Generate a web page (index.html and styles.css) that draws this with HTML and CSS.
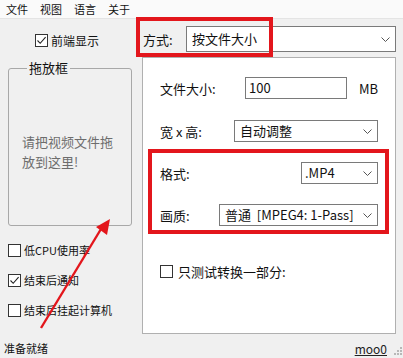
FILE: index.html
```html
<!DOCTYPE html>
<html lang="zh-CN">
<head>
    <meta charset="UTF-8">
    <title>Moo0 视频转换器</title>
    <link rel="stylesheet" href="styles.css">
</head>
<body>
    <div class="window">
        <div class="menubar">
            <span>文件</span>
            <span>视图</span>
            <span>语言</span>
            <span>关于</span>
        </div>
        <div class="main">
            <div class="side">
                <div class="check top-check">
                    <span class="box"><svg width="11" height="11" viewBox="0 0 11 11"><path d="M1.5 5.5 L4.2 8.3 L9.6 2.2" fill="none" stroke="#222" stroke-width="1.1"/></svg></span>
                    <span>前端显示</span>
                </div>
                <fieldset class="dropbox">
                    <legend>拖放框</legend>
                    <p>请把视频文件拖放到这里!</p>
                </fieldset>
                <div class="side-checks">
                    <div class="check">
                        <span class="box"></span>
                        <span>低CPU使用率</span>
                    </div>
                    <div class="check">
                        <span class="box"><svg width="11" height="11" viewBox="0 0 11 11"><path d="M1.5 5.5 L4.2 8.3 L9.6 2.2" fill="none" stroke="#222" stroke-width="1.1"/></svg></span>
                        <span>结束后通知</span>
                    </div>
                    <div class="check">
                        <span class="box"></span>
                        <span>结束后挂起计算机</span>
                    </div>
                </div>
            </div>
            <div class="content">
                <div class="mode-row">
                    <span class="mode-label">方式:</span>
                    <div class="combo mode-combo">
                        <span>按文件大小</span>
                        <svg width="9" height="5" viewBox="0 0 9 5"><polyline points="0.5,0.5 4.5,4.5 8.5,0.5" fill="none" stroke="#555"/></svg>
                    </div>
                </div>
                <div class="panel">
                    <div class="row">
                        <span class="label size-label">文件大小:</span>
                        <div class="textbox">100</div>
                        <span class="unit">MB</span>
                    </div>
                    <div class="row dim-row">
                        <span class="label dim-label">宽 x 高:</span>
                        <div class="combo grow">
                            <span>自动调整</span>
                            <svg width="9" height="5" viewBox="0 0 9 5"><polyline points="0.5,0.5 4.5,4.5 8.5,0.5" fill="none" stroke="#555"/></svg>
                        </div>
                    </div>
                    <div class="marked">
                        <div class="row">
                            <span class="label grow">格式:</span>
                            <div class="combo format-combo">
                                <span>.MP4</span>
                                <svg width="9" height="5" viewBox="0 0 9 5"><polyline points="0.5,0.5 4.5,4.5 8.5,0.5" fill="none" stroke="#555"/></svg>
                            </div>
                        </div>
                        <div class="row quality-row">
                            <span class="label quality-label">画质:</span>
                            <div class="combo grow">
                                <span class="keep">普通  [MPEG4: 1-Pass]</span>
                                <svg width="9" height="5" viewBox="0 0 9 5"><polyline points="0.5,0.5 4.5,4.5 8.5,0.5" fill="none" stroke="#555"/></svg>
                            </div>
                        </div>
                    </div>
                    <div class="check test-check">
                        <span class="box"></span>
                        <span>只测试转换一部分:</span>
                    </div>
                </div>
            </div>
        </div>
        <div class="statusbar">
            <span>准备就绪</span>
            <span class="right">
                <a href="#">moo0</a>
                <svg class="grip" width="9" height="9" viewBox="0 0 9 9" fill="#b8b8b8">
                    <rect x="6" y="0" width="2" height="2"/>
                    <rect x="3" y="3" width="2" height="2"/><rect x="6" y="3" width="2" height="2"/>
                    <rect x="0" y="6" width="2" height="2"/><rect x="3" y="6" width="2" height="2"/><rect x="6" y="6" width="2" height="2"/>
                </svg>
            </span>
        </div>

        <!-- annotations drawn over the window -->
        <div class="mark-mode"></div>
        <svg class="arrow" width="403" height="358" viewBox="0 0 403 358">
            <line x1="41" y1="328" x2="101" y2="229" stroke="#e3161c" stroke-width="2.4"/>
            <polygon points="110,219 96,227 107,235" fill="#e3161c"/>
        </svg>
    </div>
</body>
</html>
```

FILE: styles.css
```css
body {
    margin: 0;
    padding: 0;
    background: #f0f0f0;
    font-family: "Noto Sans CJK SC", "Noto Sans", sans-serif;
    color: #111;
}
.window {
    position: relative;
    width: 403px;
    height: 358px;
    display: flex;
    flex-direction: column;
    overflow: hidden;
}
.menubar {
    height: 18px;
    display: flex;
    align-items: center;
    gap: 12px;
    padding-left: 6px;
    font-size: 11px;
    line-height: 14px;
    background: #fafafa;
    border-bottom: 1px solid #e4e4e4;
}
.main {
    flex: 1;
    display: flex;
}
.side {
    width: 142px;
    display: flex;
    flex-direction: column;
}
.check {
    display: flex;
    align-items: center;
    height: 20px;
    font-size: 11px;
    gap: 3px;
}
.box {
    width: 11px;
    height: 11px;
    border: 1px solid #333;
    background: #fff;
    display: inline-flex;
}
.top-check {
    margin: 11px 0 0 35px;
    font-size: 12px;
}
.dropbox {
    margin: 10px 10px 0 8px;
    padding: 56px 0 0 13px;
    height: 108px;
    border: 1px solid #a8a8a8;
    border-radius: 3px;
}
.dropbox legend {
    margin-left: 5px;
    padding: 0 2px;
    font-size: 13px;
    line-height: 16px;
}
.dropbox p {
    margin: 0;
    width: 96px;
    font-size: 13px;
    line-height: 20px;
    color: #6d6d6d;
}
.side-checks {
    display: flex;
    flex-direction: column;
    gap: 10px;
    margin: 14px 0 0 8px;
}
.content {
    width: 254px;
    display: flex;
    flex-direction: column;
    font-size: 13px;
}
.mode-row {
    display: flex;
    align-items: center;
    padding: 7px 0 5px 1px;
}
.mode-label {
    width: 43px;
}
.combo {
    height: 20px;
    background: #fff;
    border: 1px solid #7a7a7a;
    display: flex;
    align-items: center;
    padding: 0 5px 0 5px;
    line-height: 18px;
}
.combo span {
    flex: 1;
}
.combo .keep {
    white-space: pre;
}
.mode-combo {
    flex: 1;
    height: 24px;
    padding-right: 5px;
}
.panel {
    flex: 1;
    margin-bottom: 4px;
    background: #fff;
    border: 1px solid #b0b0b0;
    padding: 19px 17px 0 17px;
}
.row {
    display: flex;
    align-items: center;
    height: 22px;
}
.grow {
    flex: 1;
}
.size-label {
    width: 85px;
}
.textbox {
    box-sizing: border-box;
    width: 102px;
    height: 22px;
    border: 1px solid #7a7a7a;
    padding-left: 3px;
    line-height: 20px;
}
.unit {
    margin-left: 12px;
}
.dim-row {
    margin-top: 21px;
}
.dim-label {
    width: 74px;
}
.marked {
    margin: 7px -11px 0 -12px;
    border: 4px solid #e3161c;
    padding: 9px 7px 4px 8px;
}
.format-combo {
    width: 67px;
    padding-left: 3px;
}
.quality-row {
    margin-top: 20px;
}
.quality-label {
    width: 59px;
}
.test-check {
    margin-top: 27px;
    font-size: 13px;
    gap: 5px;
}
.statusbar {
    height: 20px;
    display: flex;
    align-items: center;
    justify-content: space-between;
    padding-left: 4px;
    font-size: 11px;
}
.statusbar .right {
    display: flex;
    align-items: flex-end;
    gap: 7px;
}
.statusbar a {
    color: #222;
    font-size: 12px;
    text-decoration: underline;
}
.grip {
    margin-bottom: 1px;
}
.mark-mode {
    position: absolute;
    left: 136px;
    top: 17px;
    width: 129px;
    height: 32px;
    border: 4px solid #e3161c;
}
.arrow {
    position: absolute;
    left: 0;
    top: 0;
    pointer-events: none;
}
```
